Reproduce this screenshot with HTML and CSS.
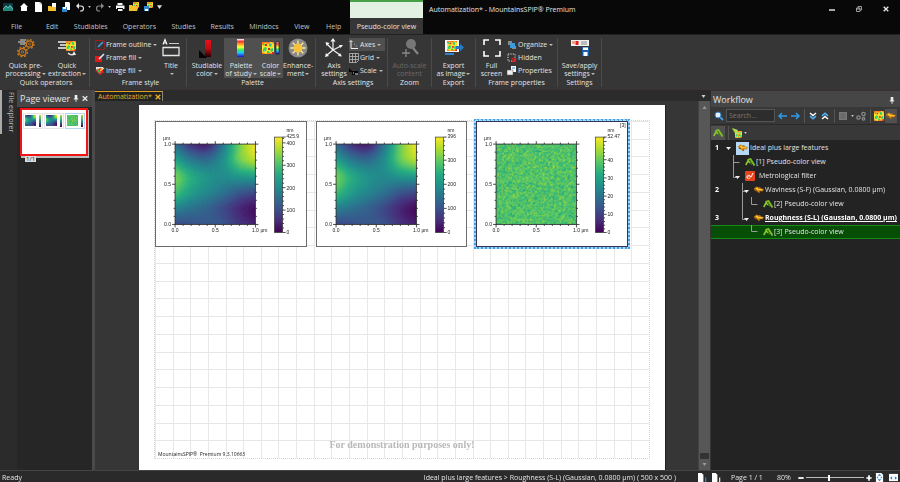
FILE: index.html
```html
<!DOCTYPE html>
<html lang="en">
<head>
<meta charset="utf-8">
<title>Automatization* - MountainsSPIP® Premium</title>
<link rel="stylesheet" href="styles.css">
</head>
<body>
<svg class="sprite" aria-hidden="true">
  <defs>
    <linearGradient id="rainbow" x1="0" y1="0" x2="0" y2="1">
      <stop offset="0" stop-color="#fff"/><stop offset=".14" stop-color="#f33"/><stop offset=".3" stop-color="#fa2"/><stop offset=".45" stop-color="#ff4"/><stop offset=".6" stop-color="#3e5"/><stop offset=".75" stop-color="#2cf"/><stop offset="1" stop-color="#21c"/>
    </linearGradient>
    <linearGradient id="redfade" x1="0" y1="0" x2="0" y2="1">
      <stop offset="0" stop-color="#e8101c"/><stop offset=".5" stop-color="#c00c14"/><stop offset="1" stop-color="#200"/>
    </linearGradient>
    <linearGradient id="viridis" x1="0" y1="1" x2="0" y2="0">
      <stop offset="0" stop-color="#440154"/><stop offset=".125" stop-color="#472d7b"/><stop offset=".25" stop-color="#3b528b"/><stop offset=".375" stop-color="#2c728e"/><stop offset=".5" stop-color="#21918c"/><stop offset=".625" stop-color="#28ae80"/><stop offset=".75" stop-color="#5ec962"/><stop offset=".875" stop-color="#addc30"/><stop offset="1" stop-color="#fde725"/>
    </linearGradient>
  </defs>
  <symbol id="caret" viewBox="0 0 4 3"><path d="M0 0h4L2 3z" fill="currentColor"/></symbol>
  <symbol id="map" viewBox="0 0 12 12"><rect width="12" height="12" fill="#ff7a1e"/><path d="M0 3l3-2 3 1 3-2 3 2v8l-3 1-2-1-3 2-4-2z" fill="#ffe02a"/><path d="M1 7l2-2 2 1-1 3-3 1zM7 1l3 1-1 3-2-1zM8 7l3-1v3l-2 1zM1 1l2 1-1 2-1-1zM5 9l2 0 0 2-2 0z" fill="#2fd35c"/><path d="M2 8h2v1H2zM8 2h1v1H8z" fill="#28c7f0"/><path d="M3 2h2v2H3zM6 6h2v2H6zM10 10h2v2h-2z" fill="#e8231c"/></symbol>
  <symbol id="logo" viewBox="0 0 10 8"><rect width="10" height="8" fill="#10333c"/><path d="M0 6l3-4 2 2 2-3 3 4v3H0z" fill="#21877a"/><path d="M0 6l3-3 2 2 2-2 3 3" fill="none" stroke="#8cc" stroke-width=".7"/></symbol>
  <symbol id="home" viewBox="0 0 10 10"><path d="M5 1l4 4H8v4H2V5H1z" fill="#fff"/></symbol>
  <symbol id="file" viewBox="0 0 10 10"><path d="M2 0h5l2 2v8H2z" fill="#fff"/><path d="M7 0v2h2" fill="none" stroke="#aaa" stroke-width=".6"/></symbol>
  <symbol id="folder" viewBox="0 0 10 10"><path d="M5 1h4v5H5z" fill="#fff"/><path d="M1 4h3l1 1h4v4H1z" fill="#f5c02d"/></symbol>
  <symbol id="filesave" viewBox="0 0 10 10"><path d="M4 0h4l1 1v7H4z" fill="#fff"/><path d="M1 5h5v5H1z" fill="#2f86cf"/><path d="M2 5h3v2H2z" fill="#fff"/></symbol>
  <symbol id="undo" viewBox="0 0 10 10"><path d="M2 4h4a2.500 2.500 0 0 1 0 5H5" fill="none" stroke="currentColor" stroke-width="1.200"/><path d="M4 1L1 4l3 3z" fill="currentColor"/></symbol>
  <symbol id="print" viewBox="0 0 10 10"><path d="M2.500 1h5v2h-5zM1 3.500h8.500V7H8V6H2v1H1zM3 7h4.500v2H3z" fill="#f4f4f4"/></symbol>
  <symbol id="foldermap" viewBox="0 0 10 10"><use href="#map" x="4" y="0" width="6" height="6"/><path d="M0 3h3l1 1h4l1 2-1 3H0z" fill="#f5c02d"/></symbol>
  <symbol id="savemap" viewBox="0 0 10 10"><use href="#map" x="4" y="0" width="6" height="6"/><path d="M1 4h5v5H1z" fill="#2f86cf"/><path d="M2 7h3v2H2z" fill="#fff"/></symbol>
  <symbol id="pick" viewBox="0 0 12 10"><use href="#map" x="3" y="3" width="7" height="7"/><path d="M0 0l6 2-1 2 3 0-1 2-4-1z" fill="#b8d96a"/><path d="M0 0l3 5" stroke="#6fa01f"/></symbol>
  <symbol id="gears" viewBox="0 0 20 20">
    <g fill="none" stroke="#c97a1c"><circle cx="13.500" cy="6" r="3.200" stroke-width="1.300"/><circle cx="13.500" cy="6" r="4.400" stroke-width="1.400" stroke-dasharray="1.700 1.750"/><circle cx="6.500" cy="14" r="3.500" stroke-width="1.300"/><circle cx="6.500" cy="14" r="4.800" stroke-width="1.500" stroke-dasharray="1.900 1.870"/><circle cx="13.500" cy="6" r="1" stroke-width=".8"/><circle cx="6.500" cy="14" r="1.200" stroke-width=".8"/></g>
    <path d="M4 2h6M2 4h7M4 6h5" stroke="#ddd" stroke-width="1"/>
  </symbol>
  <symbol id="extract" viewBox="0 0 20 20"><path d="M1 4h8M3 7h6M1 10h8" stroke="#f2f2f2" stroke-width="1.300"/><use href="#map" x="9" y="3" width="10" height="10"/><path d="M11 15q3 3 7 1" fill="none" stroke="#eee" stroke-width="1.300"/><path d="M17 13l2 4-4 0z" fill="#eee"/></symbol>
  <symbol id="title" viewBox="0 0 20 20"><path d="M2 6.500L4 1.500l2 5M2.800 5h2.400" fill="none" stroke="#fff" stroke-width="1.100"/><path d="M8 5.500h10" stroke="#ccc"/><path d="M2 9.500h16v8H2z" fill="none" stroke="#e6e6e6" stroke-width="1.300"/></symbol>
  <symbol id="studcolor" viewBox="0 0 20 20"><rect x="8" y="2" width="6" height="17" fill="url(#redfade)"/><path d="M2 12l8 8H2z" fill="#050505"/></symbol>
  <symbol id="palette" viewBox="0 0 20 20"><rect x="6" y="1" width="7" height="18" fill="url(#rainbow)"/></symbol>
  <symbol id="scale" viewBox="0 0 20 20"><use href="#map" x="1" y="4" width="12" height="12"/><rect x="15" y="4" width="3" height="12" fill="url(#rainbow)" stroke="#111" stroke-width=".6"/></symbol>
  <symbol id="sun" viewBox="0 0 20 20"><circle cx="10" cy="10" r="9.500" fill="#8a8a8a"/><path d="M10 2.500v15M2.500 10h15M4.700 4.700l10.600 10.600M15.300 4.700L4.700 15.300" stroke="#ffe9a0" stroke-width="1.300"/><circle cx="10" cy="10" r="4.500" fill="#f7c33a"/></symbol>
  <symbol id="axis" viewBox="0 0 20 20"><g stroke="#f4f4f4" stroke-width="1.200" fill="none"><path d="M9 2v10l7 5M9 12l-6 5M9 12L3 6M9 12l8-4"/></g><path d="M9 0l2.500 3.500h-5zM1 19l1-4 3 3zM18 18.500l-4-.5 2-3zM1.500 4l4 1-3 3zM19 7l-2.500 3-1.500-3z" fill="#f4f4f4"/></symbol>
  <symbol id="zoomin" viewBox="0 0 20 20"><circle cx="11" cy="6" r="5" fill="#777"/><path d="M13 10l5 6" stroke="#888" stroke-width="2"/><path d="M6 11v8M2 15h8" stroke="#888" stroke-width="1.300"/></symbol>
  <symbol id="export" viewBox="0 0 20 20"><path d="M1 2h14v12H1z" fill="#f5f5f5"/><use href="#map" x="3" y="3" width="10" height="10"/><path d="M12 8h4V5.500l4 4-4 4V11h-4z" fill="#2478c4"/><path d="M1 16h9" stroke="#2f86cf" stroke-width="2"/></symbol>
  <symbol id="fullscreen" viewBox="0 0 20 20"><path d="M2 7V2h5M13 2h5v5M18 13v5h-5M7 18H2v-5" fill="none" stroke="#fff" stroke-width="1.600"/></symbol>
  <symbol id="saveapply" viewBox="0 0 20 20"><path d="M1 2h18v6H1z" fill="#f0f0f0"/><path d="M2 3h3v3H2z" fill="#f0a08a"/><path d="M5.500 3h3v4h-3z" fill="#e0201c"/><path d="M11 3h6v4h-6z" fill="#bbb"/><path d="M12 9h7v9h-7z" fill="#1b5fa8"/><path d="M13 9.500h5V12h-5zM13.500 14h4v4h-4z" fill="#fff"/></symbol>
  <symbol id="outline" viewBox="0 0 10 10"><path d="M.5.5h9v9h-9z" fill="none" stroke="#b3201c" stroke-dasharray="1.500 .8"/><path d="M3 7l5-5" stroke="#4a9be0" stroke-width="1.600"/></symbol>
  <symbol id="fill" viewBox="0 0 10 10"><path d="M0 3h7v6H0z" fill="#e01b1b"/><path d="M4 6l5-5" stroke="#dfe9f5" stroke-width="1.600"/></symbol>
  <symbol id="imgfill" viewBox="0 0 10 10"><path d="M1 1h7v3H1z" fill="#e8e8e8"/><path d="M0 4l5 5 4-3-3-4z" fill="#e22"/><path d="M2 3l3 4" stroke="#2c5" stroke-width="1.500"/><path d="M5 5l4-3" stroke="#fc3" stroke-width="1.500"/></symbol>
  <symbol id="axes" viewBox="0 0 10 10"><path d="M2 1v7.500h7M.5 2L2 .5 3.500 2" fill="none" stroke="#eee"/><path d="M5 4h1M7 6h1" stroke="#aaa"/></symbol>
  <symbol id="grid" viewBox="0 0 10 10"><path d="M.5.500h9v7l-2 2h-7zM.5 3.500h9M.5 6.500h9M3.500.500v9M6.500.500v9" fill="none" stroke="#bbb" stroke-width=".8"/></symbol>
  <symbol id="ruler" viewBox="0 0 10 10"><path d="M0 2l4 4-4 0zM3 5h6v4H3z" fill="#050505"/><path d="M4 7h1M6 8h3" stroke="#eee"/></symbol>
  <symbol id="organize" viewBox="0 0 10 10"><path d="M1 1h4v4H1zM5 6h4v3H5z" fill="#8a8a8a"/><path d="M3 3h5v5H3z" fill="#3b9bdc"/></symbol>
  <symbol id="hidden" viewBox="0 0 10 10"><path d="M1 1h7v7H1z" fill="none" stroke="#ddd" stroke-dasharray="1.200 1.200"/><path d="M5 5l4 4M9 5L5 9" stroke="#e01b1b" stroke-width="1.400"/></symbol>
  <symbol id="props" viewBox="0 0 10 10"><path d="M4 0h5v6H4z" fill="#fff"/><path d="M0 4h6v5H0z" fill="#eee" stroke="#555" stroke-width=".5"/><path d="M5 2h3" stroke="#2f86cf"/></symbol>
  <symbol id="pin" viewBox="0 0 6 8"><path d="M1.500 0h3v4h1v1h-5V4h1zM2.600 5h.9v3h-.9z" fill="#eee"/></symbol>
  <symbol id="cross" viewBox="0 0 6 6"><path d="M.7.7l4.600 4.600M5.300.7L.7 5.300" stroke="currentColor" stroke-width="1.400"/></symbol>
  <symbol id="search" viewBox="0 0 10 10"><path d="M6 6l3 3" stroke="#3d9be0" stroke-width="2"/><circle cx="4" cy="4" r="3" fill="#dff1ff" stroke="#2b7cc0"/></symbol>
  <symbol id="arrow" viewBox="0 0 10 8"><path d="M4 1L1 4l3 3M1 4h8" fill="none" stroke="#2f9be8" stroke-width="1.500"/></symbol>
  <symbol id="chevs" viewBox="0 0 8 8"><path d="M1 1l3 2.500L7 1" fill="none" stroke="#fff" stroke-width="1.500"/><path d="M1 4.200l3 2.500 3-2.500" fill="none" stroke="#4ab0f5" stroke-width="1.500"/></symbol>
  <symbol id="book" viewBox="0 0 10 10"><path d="M1 1h8v8H1z" fill="#777"/><path d="M2.500 3h5M2.500 5h5M2.500 7h5" stroke="#555" stroke-width=".7"/></symbol>
  <symbol id="molecule" viewBox="0 0 10 10"><g fill="none" stroke="#888" stroke-width="1.300"><circle cx="2.500" cy="6.500" r="1.700"/><circle cx="7.500" cy="3" r="1.700"/><circle cx="7.500" cy="7.800" r="1.300"/></g></symbol>
  <symbol id="surface" viewBox="0 0 10 8"><path d="M0 2.500L2.500.500l2 1 1.500-.5 1 1.500L10 3 8.500 5.500l-2-.5L5 7.500 3.500 5.500 1 5z" fill="#c87a10"/><path d="M1.500 2.200l2-.7 1 1.500h2L9 3.300 7.500 4.500l-2-.5-1.500.8z" fill="#ffca30"/><path d="M1 4l2 .8M6 5.500L5 7" stroke="#7a4306" stroke-width=".8"/></symbol>
  <symbol id="view" viewBox="0 0 10 10"><path d="M.8 8l2.400-4.500L5 6" fill="none" stroke="#8cc832" stroke-width="1.600"/><path d="M2.500 2.800L5.500 2l2 3.200 2 3.300" fill="none" stroke="#7fbf25" stroke-width="1.800"/><path d="M5 4l1.500 3.500" stroke="#4c8512" stroke-width="1.200"/></symbol>
  <symbol id="filter" viewBox="0 0 10 10"><rect width="10" height="10" rx="1" fill="#e8431f"/><path d="M2 7l2-3 2 2 2-4" fill="none" stroke="#fff"/><circle cx="3.500" cy="6" r="1.700" fill="none" stroke="#ffd9c9" stroke-width=".8"/></symbol>
  <symbol id="fitpage" viewBox="0 0 8 10"><path d="M0 0h6l2 2v8H0z" fill="#fff"/><path d="M4 .8L6 3H2zM4 9.200L2 7h4zM.8 5l1.700-1.500v3zM7.200 5L5.500 3.500v3z" fill="#2f86cf"/></symbol>
  <symbol id="fitwidth" viewBox="0 0 10 8"><path d="M0 0h10v8H0z" fill="#fff"/><path d="M1 4.500L3.500 2.500v4zM9 4.500L6.500 2.500v4z" fill="#2f86cf"/></symbol>
  <symbol id="newpage" viewBox="0 0 10 10"><path d="M0 0h4l2 2v8H0z" fill="#fff"/><path d="M8.500 5v5" stroke="currentColor" stroke-width="1.400"/></symbol>
</svg>

<header class="top">
  <div class="quick">
    <svg class="ico app"><use href="#logo"/></svg>
    <button aria-label="Home"><svg class="ico"><use href="#home"/></svg></button>
    <button aria-label="New"><svg class="ico"><use href="#file"/></svg></button>
    <button aria-label="Open"><svg class="ico"><use href="#folder"/></svg></button>
    <button aria-label="Save"><svg class="ico"><use href="#filesave"/></svg></button>
    <button aria-label="Undo" class="drop"><svg class="ico"><use href="#undo"/></svg><svg class="caret"><use href="#caret"/></svg></button>
    <button aria-label="Redo" class="drop dim"><svg class="ico flip"><use href="#undo"/></svg><svg class="caret"><use href="#caret"/></svg></button>
    <button aria-label="Print"><svg class="ico"><use href="#print"/></svg></button>
    <button aria-label="Load studiable"><svg class="ico"><use href="#foldermap"/></svg></button>
    <button aria-label="Save studiable"><svg class="ico"><use href="#savemap"/></svg></button>
    <button aria-label="Customize"><svg class="more"><use href="#caret"/></svg></button>
  </div>
  <nav class="menu">
    <button class="m-file">File</button><button class="m-edit">Edit</button><button class="m-wide">Studiables</button><button class="m-wide">Operators</button><button>Studies</button><button>Results</button><button class="m-mini">Minidocs</button><button class="m-view">View</button><button class="m-help">Help</button>
  </nav>
  <button class="context">Pseudo-color view</button>
  <h1>Automatization* - MountainsSPIP® Premium</h1>
  <div class="window">
    <button aria-label="Minimize"><svg viewBox="0 0 6 6"><path d="M0 4h6" stroke="#ddd" stroke-width="1.500"/></svg></button>
    <button aria-label="Restore"><svg viewBox="0 0 6 6"><path d="M2 2V.5h3.500V4H4M.5 2h3.500v3.500H.5zM.5 3H4" fill="none" stroke="#bbb" stroke-width=".8"/></svg></button>
    <button aria-label="Close"><svg><use href="#cross"/></svg></button>
  </div>
</header>

<div class="ribbon">
  <section class="g-ops"><div class="tools">
    <button class="big w-pre"><svg><use href="#gears"/></svg><span>Quick pre-</span><span class="dd">processing</span></button>
    <button class="big w-ext"><svg><use href="#extract"/></svg><span>Quick</span><span class="dd">extraction</span></button>
  </div><h2>Quick operators</h2></section>
  <section class="g-frame"><div class="tools">
    <div class="stack"><button class="dd"><svg><use href="#outline"/></svg>Frame outline</button><button class="dd"><svg><use href="#fill"/></svg>Frame fill</button><button class="dd"><svg><use href="#imgfill"/></svg>Image fill</button></div>
    <button class="big w-mid"><svg><use href="#title"/></svg><span>Title</span><span class="dd"></span></button>
  </div><h2>Frame style</h2></section>
  <section class="g-pal"><div class="tools">
    <button class="big w-stud"><svg><use href="#studcolor"/></svg><span>Studiable</span><span class="dd">color</span></button>
    <button class="big w-stud on"><svg><use href="#palette"/></svg><span>Palette</span><span class="dd">of study</span></button>
    <button class="big w-scale on"><svg><use href="#scale"/></svg><span>Color</span><span class="dd">scale</span></button>
    <button class="big w-mid"><svg><use href="#sun"/></svg><span>Enhance-</span><span class="dd">ment</span></button>
  </div><h2>Palette</h2></section>
  <section class="g-axis"><div class="tools">
    <button class="big w-mid"><svg><use href="#axis"/></svg><span>Axis</span><span>settings</span></button>
    <div class="stack"><button class="dd on"><svg><use href="#axes"/></svg>Axes</button><button class="dd"><svg><use href="#grid"/></svg>Grid</button><button class="dd"><svg><use href="#ruler"/></svg>Scale</button></div>
  </div><h2>Axis settings</h2></section>
  <section class="g-one"><div class="tools">
    <button class="big" disabled><svg><use href="#zoomin"/></svg><span>Auto-scale</span><span>content</span></button>
  </div><h2>Zoom</h2></section>
  <section class="g-one"><div class="tools">
    <button class="big"><svg><use href="#export"/></svg><span>Export</span><span class="dd">as image</span></button>
  </div><h2>Export</h2></section>
  <section class="g-prop"><div class="tools">
    <button class="big w-full"><svg><use href="#fullscreen"/></svg><span>Full</span><span>screen</span></button>
    <div class="stack"><button class="dd"><svg><use href="#organize"/></svg>Organize</button><button><svg><use href="#hidden"/></svg>Hidden</button><button><svg><use href="#props"/></svg>Properties</button></div>
  </div><h2>Frame properties</h2></section>
  <section class="g-one"><div class="tools">
    <button class="big"><svg><use href="#saveapply"/></svg><span>Save/apply</span><span class="dd">settings</span></button>
  </div><h2>Settings</h2></section>
</div>

<main>
  <aside class="explorer"><button>File explorer</button></aside>
  <aside class="viewer">
    <div class="panel-head"><h2>Page viewer</h2><button aria-label="Pin"><svg><use href="#pin"/></svg></button><button aria-label="Close panel"><svg><use href="#cross"/></svg></button></div>
    <div class="pages">
      <button class="thumb" aria-label="Page 1">
        <span class="mini"><canvas data-field="plus" width="24" height="24"></canvas><i></i></span>
        <span class="mini"><canvas data-field="wave" width="24" height="24"></canvas><i></i></span>
        <span class="mini sel"><canvas data-field="rough" width="24" height="24"></canvas><i></i></span>
      </button>
      <span class="count">1/1</span>
    </div>
  </aside>
  <section class="document">
    <div class="tabs"><button class="tab">Automatization* <svg><use href="#cross"/></svg></button><svg class="caret"><use href="#caret"/></svg></div>
    <div class="desk">
      <div class="sheet">
        <div class="margins">
          <div class="frames">
            <figure data-field="plus" data-max="425.9" data-step="100"></figure>
            <figure data-field="wave" data-max="396" data-step="100"></figure>
            <figure class="selected" data-field="rough" data-max="52.47" data-step="10" data-tag="[3]"></figure>
          </div>
          <p class="demo">For demonstration purposes only!</p>
          <p class="version">MountainsSPIP®&nbsp; Premium 9.3.10663</p>
        </div>
      </div>
      <div class="scroll"><svg class="caret up"><use href="#caret"/></svg><span></span><i></i><svg class="caret"><use href="#caret"/></svg></div>
    </div>
  </section>
  <aside class="workflow">
    <div class="panel-head"><h2>Workflow</h2><button aria-label="Pin"><svg><use href="#pin"/></svg></button></div>
    <div class="bar">
      <label for="q"><svg class="ico"><use href="#search"/></svg></label>
      <input id="q" type="text" placeholder="Search..." aria-label="Search">
      <button aria-label="Previous"><svg class="ico"><use href="#arrow"/></svg></button>
      <button aria-label="Next"><svg class="ico flip"><use href="#arrow"/></svg></button>
      <button class="cut" aria-label="Expand"><svg class="glyph"><use href="#chevs"/></svg></button>
      <button aria-label="Collapse"><svg class="glyph turn"><use href="#chevs"/></svg></button>
      <button class="cut drop dim" aria-label="Notes"><svg class="ico"><use href="#book"/></svg><svg class="caret"><use href="#caret"/></svg></button>
      <button aria-label="Links"><svg class="ico"><use href="#molecule"/></svg></button>
      <button class="cut" aria-label="Maps"><svg class="ico"><use href="#map"/></svg></button>
      <button class="on" aria-label="Surfaces"><svg class="ico"><use href="#surface"/></svg></button>
    </div>
    <div class="bar second">
      <button class="on" aria-label="Show views"><svg class="ico"><use href="#view"/></svg></button>
      <button class="cut" aria-label="Filter"><svg class="wide"><use href="#pick"/></svg><svg class="caret"><use href="#caret"/></svg></button>
    </div>
    <ul class="tree">
      <li><b>1</b><svg class="d0"><path class="tip" d="M1 6h5L3.500 9z"/></svg><span class="boxed"><svg class="ico"><use href="#surface"/></svg></span><span>Ideal plus large features</span></li>
      <li><b></b><svg class="d1"><path d="M8.500 0v14M8.500 7.500h6"/></svg><svg class="ico"><use href="#view"/></svg><span>[1] Pseudo-color view</span></li>
      <li><b></b><svg class="d1"><path d="M8.500 0v8.500h3"/><path class="tip" d="M10 7h5l-2.500 3z"/></svg><svg class="ico"><use href="#filter"/></svg><span class="far">Metrological filter</span></li>
      <li><b>2</b><svg class="d2"><path d="M17.500 0v14M17.500 8.500h3"/><path class="tip" d="M19 7h5l-2.500 3z"/></svg><svg class="ico"><use href="#surface"/></svg><span>Waviness (S-F) (Gaussian, 0.0800 µm)</span></li>
      <li><b></b><svg class="d3"><path d="M17.500 0v14M26.500 0v7.500h6"/></svg><svg class="ico"><use href="#view"/></svg><span>[2] Pseudo-color view</span></li>
      <li><b>3</b><svg class="d2"><path d="M17.500 0v8.500h3"/><path class="tip" d="M19 7h5l-2.500 3z"/></svg><svg class="ico"><use href="#surface"/></svg><strong>Roughness (S-L) (Gaussian, 0.0800 µm)</strong></li>
      <li class="current"><b></b><svg class="d3"><path d="M26.500 0v6.500h6"/></svg><svg class="ico"><use href="#view"/></svg><span>[3] Pseudo-color view</span></li>
    </ul>
  </aside>
</main>

<footer>
  <span class="ready">Ready</span>
  <span class="path">Ideal plus large features &gt; Roughness (S-L) (Gaussian, 0.0800 µm) ( 500 x 500 )</span>
  <div class="zoom">
    <button aria-label="Add page" class="blue"><svg class="ico"><use href="#newpage"/></svg></button>
    <button aria-label="Insert page"><svg class="ico"><use href="#newpage"/></svg></button>
    <span class="pg">Page 1 / 1</span>
    <label class="pct" for="z">80%</label>
    <button aria-label="Zoom out"><svg class="sign" viewBox="0 0 6 6"><path d="M1 3h4" stroke="#fff" stroke-width="1.300"/></svg></button>
    <input id="z" type="range" min="0" max="100" value="40">
    <button aria-label="Zoom in"><svg class="sign" viewBox="0 0 6 6"><path d="M1 3h4M3 1v4" stroke="#fff" stroke-width="1.300"/></svg></button>
    <button aria-label="Fit page" class="fit"><svg class="ico"><use href="#fitpage"/></svg></button>
    <button aria-label="Fit width"><svg class="ico"><use href="#fitwidth"/></svg></button>
  </div>
</footer>
<script src="plots.js"></script>
</body>
</html>
```

FILE: styles.css
```css
* { box-sizing: border-box; margin: 0; padding: 0; }
body {
  min-height: 100vh;
  display: flex;
  flex-direction: column;
  background: #363636;
  color: #e4e4e4;
  font: 7px/8px "Open Sans", "Noto Sans", sans-serif;
}
button, input {
  font: inherit;
  color: inherit;
  background: none;
  border: 0;
}
button { white-space: nowrap; display: flex; align-items: center; }
h1, h2 { font-weight: 400; white-space: nowrap; }
svg { display: block; flex: none; }
.sprite { position: absolute; width: 0; height: 0; }
.ico { width: 10px; height: 10px; }
.glyph { width: 8px; height: 8px; margin: 0 1px; }
.wide { width: 12px; height: 10px; }
.caret { width: 3px; height: 2px; color: #ccc; }
.flip { transform: scaleX(-1); }
.turn { transform: rotate(180deg); }
.dd::after {
  content: "";
  display: inline-block;
  margin-left: 1px;
  vertical-align: middle;
  border: 2px solid transparent;
  border-top-color: #bbb;
  border-bottom: 0;
}

/* Title bar and menu */
.top {
  display: grid;
  grid-template-columns: 350px 73px 1fr auto;
  grid-template-rows: 18px 16px;
  background: #080808;
}
.quick { display: flex; align-items: center; padding: 0 0 4px 3px; gap: 4px; }
.app { margin-right: 2px; }
.drop { gap: 3px; }
.dim { color: #888; }
.more { width: 5px; height: 4px; }
.menu { grid-row: 2; display: flex; padding: 2px 0 0 11px; color: #c4c4c4; }
.menu button { width: 39px; }
.menu .m-file { width: 35px; }
.menu .m-edit { width: 28px; }
.menu .m-wide { width: 49px; }
.menu .m-mini { width: 45px; }
.menu .m-view { width: 32px; }
.menu .m-help { width: 24px; }
.context {
  grid-area: 1 / 2 / 3 / 3;
  padding-top: 20px;
  justify-content: center;
  background: linear-gradient(#46a046 2px, #e2f1e1 2px, #e2f1e1 18px, #363636 18px);
}
.top h1 { grid-area: 1 / 3; align-self: center; padding: 1px 0 0 6px; font-size: 7px; }
.window { grid-area: 1 / 4; display: flex; align-items: center; gap: 21px; padding-right: 11px; }
.window svg { width: 6px; height: 6px; }

/* Ribbon */
.ribbon { display: flex; height: 56px; padding-top: 3px; border-top: 1px solid #222; border-bottom: 1px solid #3a3236; background: #363636; }
.ribbon section { display: flex; flex-direction: column; margin-bottom: 2px; border-right: 1px solid #4a4a4a; }
.ribbon h2 { font-size: 7px; line-height: 9px; text-align: center; }
.g-ops { width: 90px; padding-left: 3px; }
.g-frame { width: 97px; padding-left: 5px; }
.g-pal { width: 129px; padding-left: 3px; }
.g-axis { width: 72px; padding-left: 3px; }
.g-one { width: 44px; }
.g-prop { width: 82px; }
.tools { display: flex; height: 41px; }
.big { flex-direction: column; flex: 1; }
.big svg { width: 20px; height: 20px; margin-bottom: 4px; }
.w-pre { flex: 0 0 45px; }
.w-ext { flex: 0 0 38px; }
.w-mid { flex: 0 0 30px; }
.w-stud { flex: 0 0 34px; }
.w-scale { flex: 0 0 25px; }
.w-full { flex: 0 0 31px; }
.on { background: #505050; }
.big:disabled { color: #6a6a6a; }
.stack { display: flex; flex-direction: column; }
.stack button { height: 13px; gap: 1px; padding-right: 2px; }
.g-frame .stack { width: 61px; }
.stack svg { width: 10px; height: 10px; }

/* Work area */
main { flex: 1; display: grid; grid-template-columns: 17px 78px 1fr 189px; min-height: 0; }
.panel-head { display: flex; align-items: center; gap: 3px; height: 17px; padding-left: 3px; background: #464646; }
.panel-head h2 { font-size: 9px; line-height: 12px; flex: 1; }
.panel-head svg { width: 6px; height: 7px; }
.explorer { background: #2b2b2b; }
.explorer button { writing-mode: vertical-rl; width: 17px; height: 44px; padding-left: 3px; border-left: 2px solid #aaa; justify-content: center; color: #bbb; }
.viewer { border-right: 3px solid #4a4a4a; background: #262626; }
.viewer .panel-head { padding-right: 4px; }
.pages { display: flex; flex-direction: column; align-items: flex-start; padding: 1px 4px 0 3px; }
.thumb { align-items: flex-start; width: 100%; height: 48px; padding: 3px 1px; gap: 1px; background: #fff; border: 2px solid #f01414; box-shadow: 1px 2px 0 #bbb; }
.mini { display: flex; justify-content: space-between; flex: 1; padding: 1px; border: 1px solid #e4e4e4; }
.mini canvas { width: 11px; height: 11px; }
.mini i { width: 2px; height: 12px; background: linear-gradient(#ad3, #298, #405); }
.mini.sel { border-color: #b5d5f0; }
.count { position: relative; margin: 0 5px; padding: 0 1px; background: #ddd; color: #222; font-size: 6px; line-height: 6px; }
.document { display: flex; flex-direction: column; min-width: 0; }
.tabs { display: flex; align-items: center; justify-content: space-between; height: 11px; padding: 1px 5px 0 0; background: #2b2b2b; }
.tabs .caret { width: 5px; height: 3px; }
.tab { height: 10px; padding: 0 1px 0 3px; gap: 3px; border-top: 1px solid #e0a020; border-right: 1px solid #888; background: #222; color: #e9ac2c; }
.tab svg { width: 6px; height: 6px; }
.desk { flex: 1; display: flex; min-height: 0; padding-right: 1px; }
.sheet { flex: 1; display: flex; margin: 4px 33px 0 44px; padding: 16px 16px 12px; background: #fff; box-shadow: 1px 0 0 #222; }
.margins {
  flex: 1;
  display: flex;
  flex-direction: column;
  outline: 1px dotted #d5d5d5;
  background-image:
    repeating-linear-gradient(90deg, #e8e8e8 0 1px, transparent 1px calc(100% / 28)),
    repeating-linear-gradient(#e6e6e6 0 1px, transparent 1px calc(100% / 19));
}
.frames { display: grid; grid-template-columns: repeat(3, 1fr); gap: 9px; padding-right: 21px; }
figure { border: 1px solid #6b6b6b; background: #fff; }
figure svg { width: 100%; height: auto; }
figure text { font: 5px "Liberation Sans", sans-serif; fill: #222; }
figure foreignObject canvas { display: block; width: 100%; height: 100%; }
.selected { border-color: #335; outline: 2px dotted #3f9fe6; box-shadow: 0 0 0 2px #a9d4f5; }
.demo { margin: auto 0 0; text-align: center; font: bold 10px/12px "Liberation Serif", serif; color: #b9b9b9; }
.version { padding: 0 0 1px 3px; font-size: 5px; line-height: 6px; color: #222; }
.scroll { width: 12px; display: flex; flex-direction: column; align-items: center; padding: 5px 0 4px; background: #575757; border-left: 1px solid #444; }
.scroll span { flex: 1; }
.scroll i { width: 9px; height: 6px; margin-bottom: 4px; background: #333; }
.scroll .caret { width: 5px; height: 3px; color: #999; }
.up { transform: scaleY(-1); }

/* Workflow */
.workflow { background: #232323; }
.workflow .panel-head { padding: 2px 5px 0 2px; border-top: 1px solid #333; }
.bar { display: flex; align-items: center; height: 17px; padding-left: 3px; background: #383838; }
.bar button { height: 14px; padding: 0 1px; }
.bar input { width: 49px; height: 13px; margin: 0 2px; padding: 0 2px; border: 1px solid #555; background: #2d2d2d; }
.bar input::placeholder { color: #777; opacity: 1; }
.bar .cut { margin-left: 3px; border-left: 1px solid #555; padding-left: 3px; }
.bar.second { height: 16px; padding-left: 0; border-top: 1px solid #2a2a2a; }
.second .on { width: 14px; padding: 0 2px; }
.tree { list-style: none; padding-top: 1px; }
.tree li { display: flex; align-items: center; height: 14px; white-space: nowrap; }
.tree b { width: 14px; padding-left: 4px; color: #fff; }
.tree svg:not(.ico) { height: 14px; fill: none; stroke: #999; }
.tree .tip { fill: #eee; stroke: none; }
.tree span, .tree strong { margin-left: 1px; }
.tree .far { margin-left: 4px; }
.tree strong { color: #fff; text-decoration: underline; }
.tree .boxed { display: flex; align-items: center; justify-content: center; width: 13px; height: 13px; margin: 0; background: #b5d8f7; }
.d0 { width: 11px; }
.d1 { width: 20px; }
.d2 { width: 29px; }
.d3 { width: 38px; }
.tree .current { background: #064d06; border: 1px solid #158a15; border-width: 1px 0; }

/* Status bar */
footer { display: flex; align-items: center; height: 12px; padding: 2px 1px 0 2px; border-top: 1px solid #444; background: #2a2a2a; white-space: nowrap; }
.ready { flex: 1; }
.path { margin-right: 22px; }
.zoom { display: flex; align-items: center; width: 201px; }
.zoom .ico { width: 9px; height: 9px; }
.zoom button + button { margin-left: 5px; }
.blue { color: #2f86cf; }
.pg { margin-left: 10px; width: 46px; }
.pct { width: 20px; }
.sign { width: 8px; height: 8px; }
.zoom input { appearance: none; width: 58px; height: 8px; margin: 0 1px; background: linear-gradient(#bbb, #bbb) center / 100% 1px no-repeat; }
.zoom input::-webkit-slider-thumb { appearance: none; width: 2px; height: 6px; background: #fff; }
.zoom .fit { margin-left: 2px; }
```

FILE: plots.js
```js
const STOPS = [[68,1,84],[71,45,123],[59,82,139],[44,114,142],[33,145,140],[40,174,128],[94,201,98],[173,220,48],[253,231,37]];

// Height samples on a 6 x 6 lattice, top row first, scaled to 0..1.
const BASE = [
  [.36, .14, .09, .40, .78, 1.0],
  [.58, .41, .36, .50, .76, .90],
  [.79, .61, .51, .48, .53, .56],
  [.70, .55, .46, .38, .28, .23],
  [.45, .38, .32, .23, .12, .04],
  [.22, .25, .28, .26, .16, .09]
];

let seed = 7;
function random() {
  seed = (seed * 16807) % 2147483647;
  return seed / 2147483647;
}

function viridis(v) {
  const t = Math.max(0, Math.min(1, v)) * (STOPS.length - 1);
  const i = Math.min(STOPS.length - 2, Math.floor(t));
  return STOPS[i].map((c, k) => c + (STOPS[i + 1][k] - c) * (t - i));
}

function cubic(p, t) {
  const n = p.length - 1;
  const x = t * n;
  const i = Math.min(n - 1, Math.floor(x));
  const f = x - i;
  const b = p[i], c = p[i + 1];
  const a = i > 0 ? p[i - 1] : 2 * b - c;
  const d = i + 2 <= n ? p[i + 2] : 2 * c - b;
  return b + .5 * f * (c - a + f * (2 * a - 5 * b + 4 * c - d + f * (3 * (b - c) + d - a)));
}

function height(kind, x, y) {
  if (kind === 'rough') return .72 + (random() + random() + random() - 1.5) * .12;
  const v = cubic(BASE.map(row => cubic(row, x)), y);
  return v + (kind === 'plus' ? (random() - .5) * .035 : -.01);
}

function paint(canvas, kind) {
  const w = canvas.width, h = canvas.height;
  const ctx = canvas.getContext('2d');
  const img = ctx.createImageData(w, h);
  for (let y = 0; y < h; y++) {
    for (let x = 0; x < w; x++) {
      const c = viridis(height(kind, x / (w - 1), y / (h - 1)));
      img.data.set([c[0], c[1], c[2], 255], (y * w + x) * 4);
    }
  }
  ctx.putImageData(img, 0, 0);
}

function figure(el) {
  const { field, max, step, tag } = el.dataset;
  const L = 19, T = 22, S = 80, R = L + S, B = T + S;
  const top = 15, bottom = 110;
  let ticks = '', text = '';
  for (let i = 0; i <= 10; i++) {
    const p = i * S / 10, n = i % 5 ? 1.5 : 3;
    ticks += `M${L + p} ${B}v${n}M${L + p} ${T}v${-n}M${L} ${T + p}h${-n}M${R} ${T + p}h${n}`;
  }
  ['0.0', '0.5', '1.0'].forEach((s, i) => {
    text += `<text x="${L + i * S / 2}" y="${B + 8}" text-anchor="middle">${s}</text>`;
    text += `<text x="${L - 4}" y="${B + 2 - i * S / 2}" text-anchor="end">${s}</text>`;
  });
  text += `<text x="${R + 5}" y="${B + 8}">µm</text><text x="7" y="18">µm</text><text x="130" y="10">nm</text>`;
  for (let v = 0, k = 0; v < max; v += step / 5, k++) {
    const y = bottom - v / max * (bottom - top);
    ticks += `M126 ${y}h${k % 5 ? 1.5 : 3}`;
    // A label too close to the maximum would collide with it.
    if (k % 5 === 0 && y - top > 5) text += `<text x="130" y="${y + 2}">${Math.round(v)}</text>`;
  }
  ticks += `M126 ${top}h3`;
  text += `<text x="130" y="${top + 1}">${max}</text>`;
  if (tag) text += `<text x="148" y="5" text-anchor="end">${tag}</text>`;
  const n = field === 'rough' ? 60 : 160;
  el.innerHTML = `<svg viewBox="0 0 149 123">
    <foreignObject x="${L}" y="${T}" width="${S}" height="${S}"><canvas width="${n}" height="${n}"></canvas></foreignObject>
    <rect x="118" y="${top}" width="8" height="${bottom - top}" fill="url(#viridis)" stroke="#222" stroke-width=".6"/>
    <path d="M${L} ${T}h${S}v${S}h${-S}z${ticks}" fill="none" stroke="#222" stroke-width=".8"/>${text}</svg>`;
  paint(el.querySelector('canvas'), field);
}

document.querySelectorAll('figure').forEach(figure);
document.querySelectorAll('.mini canvas').forEach(c => paint(c, c.dataset.field));
```
